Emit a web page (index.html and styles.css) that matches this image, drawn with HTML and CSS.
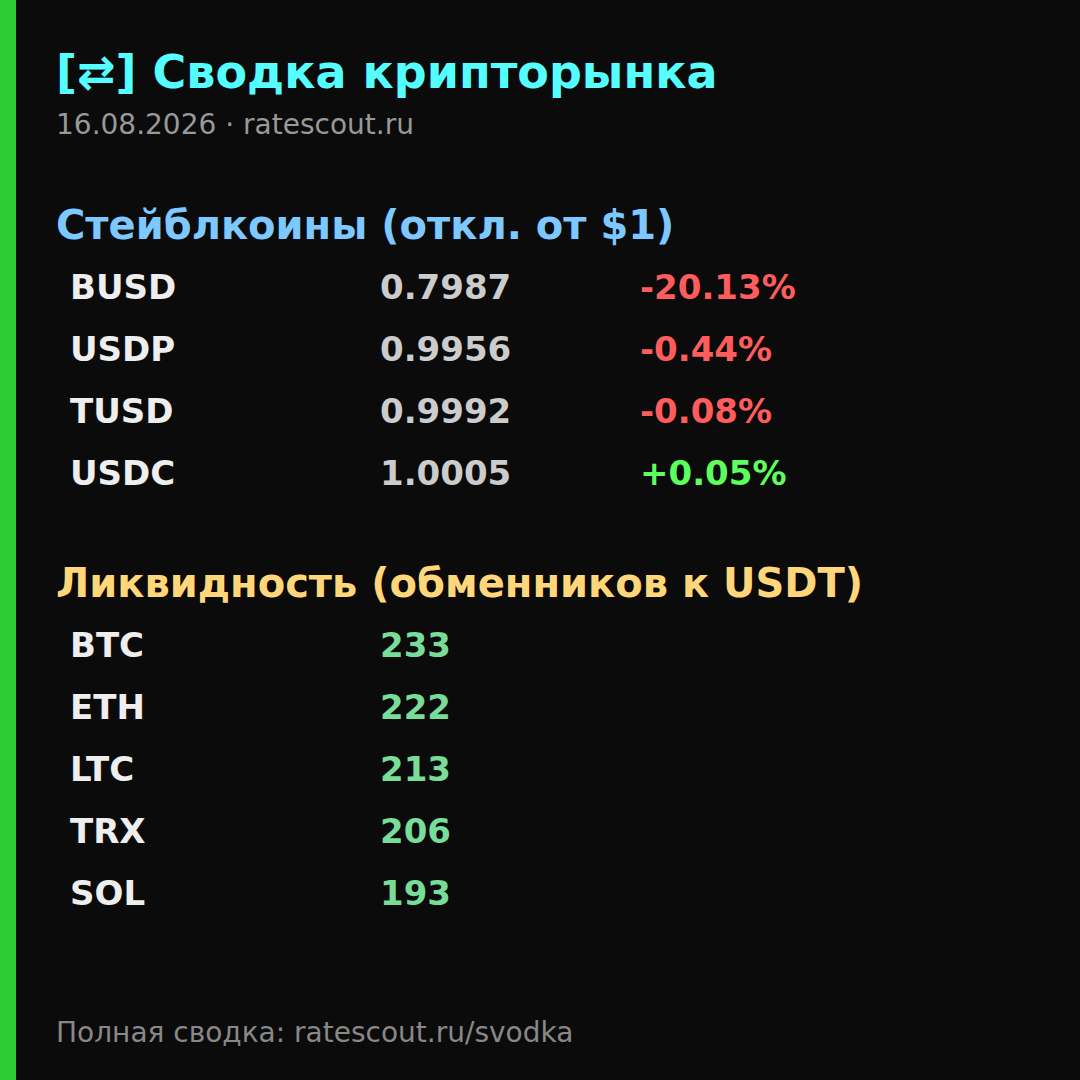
FILE: index.html
```html
<!DOCTYPE html>
<html lang="ru">
<head>
<meta charset="utf-8">
<link rel="stylesheet" href="styles.css">
</head>
<body>
<div class="page">
  <div class="bar"></div>
  <main class="content">
    <h1 class="title">[⇄] Сводка крипторынка</h1>
    <div class="subtitle">16.08.2026 · ratescout.ru</div>

    <h2 class="section section-blue">Стейблкоины (откл. от $1)</h2>
    <div class="table">
      <div class="row"><span class="sym">BUSD</span><span class="val">0.7987</span><span class="chg neg">-20.13%</span></div>
      <div class="row"><span class="sym">USDP</span><span class="val">0.9956</span><span class="chg neg">-0.44%</span></div>
      <div class="row"><span class="sym">TUSD</span><span class="val">0.9992</span><span class="chg neg">-0.08%</span></div>
      <div class="row"><span class="sym">USDC</span><span class="val">1.0005</span><span class="chg pos">+0.05%</span></div>
    </div>

    <h2 class="section section-yellow">Ликвидность (обменников к USDT)</h2>
    <div class="table">
      <div class="row"><span class="sym">BTC</span><span class="cnt">233</span></div>
      <div class="row"><span class="sym">ETH</span><span class="cnt">222</span></div>
      <div class="row"><span class="sym">LTC</span><span class="cnt">213</span></div>
      <div class="row"><span class="sym">TRX</span><span class="cnt">206</span></div>
      <div class="row"><span class="sym">SOL</span><span class="cnt">193</span></div>
    </div>

    <div class="footer">Полная сводка: ratescout.ru/svodka</div>
  </main>
</div>
</body>
</html>
```

FILE: styles.css
```css
* { box-sizing: border-box; margin: 0; padding: 0; }
html, body {
  width: 1080px;
  height: 1080px;
  background: #0b0b0b;
  overflow: hidden;
}
body {
  font-family: "DejaVu Sans", sans-serif;
}
.page {
  display: flex;
  width: 1080px;
  height: 1080px;
}
.bar {
  width: 16px;
  flex: none;
  background: #2ecc34;
}
.content {
  flex: 1;
  display: flex;
  flex-direction: column;
  padding: 44px 0 0 40px;
}
.title {
  font-size: 46px;
  font-weight: bold;
  color: #55ffff;
  line-height: 56px;
}
.subtitle {
  font-size: 28px;
  color: #999999;
  line-height: 32px;
  margin-top: 9px;
}
.section {
  font-size: 40px;
  font-weight: bold;
  line-height: 48px;
}
.section-blue {
  color: #7cc8ff;
  margin-top: 60px;
}
.section-yellow {
  color: #ffd77a;
  margin-top: 55px;
}
.table {
  display: flex;
  flex-direction: column;
  padding-left: 14px;
  margin-top: 7px;
}
.row {
  display: grid;
  grid-template-columns: 310px 260px auto;
  font-size: 34px;
  font-weight: bold;
  line-height: 62px;
}
.sym { color: #eeeeee; }
.val { color: #cccccc; }
.neg { color: #ff5c5c; }
.pos { color: #5cff5c; }
.cnt { color: #77dd99; }
.footer {
  margin-top: auto;
  margin-bottom: 31px;
  font-size: 28px;
  color: #888888;
  line-height: 32px;
}
```
